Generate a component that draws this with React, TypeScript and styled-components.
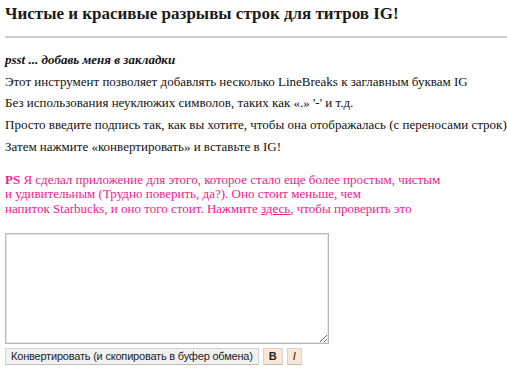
import React from 'react';
import styled, { createGlobalStyle } from 'styled-components';

const GlobalStyle = createGlobalStyle`
    body {
        margin: 0;
        background: #fff;
        font-family: "Liberation Serif", "Times New Roman", serif;
        color: #111;
    }
`;

const Wrapper = styled.div`
    padding: 4px 0 0 5px;
`;

const Title = styled.h1`
    font-size: 17px;
    font-weight: bold;
    margin: 0;
    line-height: 20px;
    color: #1a1a1a;
`;

const Rule = styled.hr`
    border: none;
    border-top: 2px solid #cccccc;
    margin: 12px 0 14px 0;
`;

const Line = styled.p`
    font-size: 13px;
    line-height: 15px;
    margin: 0 0 6.7px 0;
`;

const Hint = styled(Line)`
    font-weight: bold;
    font-style: italic;
`;

const Promo = styled.p`
    font-size: 13px;
    line-height: 14.5px;
    color: #f0208c;
    margin: 19px 0 0 0;
    b {
        font-weight: bold;
    }
    a {
        color: inherit;
        text-decoration: underline;
    }
`;

const Area = styled.textarea`
    display: block;
    width: 324px;
    height: 111px;
    box-sizing: border-box;
    margin-top: 17px;
    border: 1px solid #b8b8b8;
    box-shadow: inset 0 0 0 1px #e6e6e6;
    resize: both;
    outline: none;
`;

const Toolbar = styled.div`
    display: flex;
    gap: 4px;
    margin-top: 4px;
`;

const Button = styled.button<{ $tone?: 'plain' | 'peach' }>`
    font-family: "Liberation Sans", Arial, sans-serif;
    font-size: 11px;
    letter-spacing: ${p => (p.$tone === 'peach' ? '0' : '-0.2px')};
    height: 17px;
    padding: 0 ${p => (p.$tone === 'peach' ? '5px' : '5px')};
    background: ${p => (p.$tone === 'peach' ? '#fbe7d3' : '#f1f1f1')};
    border: 1px solid #d4d4d4;
    border-bottom-color: #bdbdbd;
    color: #222;
    cursor: pointer;
    line-height: 15px;
`;

const App: React.FC = () => {
    return (
        <Wrapper>
            <GlobalStyle />
            <Title>Чистые и красивые разрывы строк для титров IG!</Title>
            <Rule />
            <Hint>psst ... добавь меня в закладки</Hint>
            <Line>Этот инструмент позволяет добавлять несколько LineBreaks к заглавным буквам IG</Line>
            <Line>Без использования неуклюжих символов, таких как «.» '-' и т.д.</Line>
            <Line>Просто введите подпись так, как вы хотите, чтобы она отображалась (с переносами строк)</Line>
            <Line>Затем нажмите «конвертировать» и вставьте в IG!</Line>
            <Promo>
                <b>PS</b> Я сделал приложение для этого, которое стало еще более простым, чистым<br />
                и удивительным (Трудно поверить, да?). Оно стоит меньше, чем<br />
                напиток Starbucks, и оно того стоит. Нажмите <a href="#">здесь</a>, чтобы проверить это
            </Promo>
            <Area />
            <Toolbar>
                <Button type="button">Конвертировать (и скопировать в буфер обмена)</Button>
                <Button type="button" $tone="peach"><b>B</b></Button>
                <Button type="button" $tone="peach"><i>I</i></Button>
            </Toolbar>
        </Wrapper>
    );
};

export default App;
